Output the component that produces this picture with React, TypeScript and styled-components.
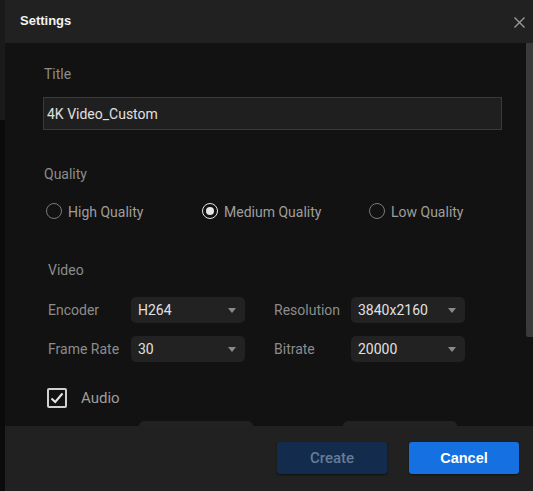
import React from "react";
import styled, { createGlobalStyle } from "styled-components";

const GlobalStyle = createGlobalStyle`
  html, body {
    margin: 0;
    padding: 0;
    background: #0b0b0b;
  }
  * {
    box-sizing: border-box;
  }
`;

const Screen = styled.div`
  display: flex;
  width: 533px;
  height: 491px;
  overflow: hidden;
  font-family: Roboto, "Liberation Sans", sans-serif;
`;

const Backdrop = styled.div`
  width: 5px;
  flex-shrink: 0;
  background: linear-gradient(#1a1a1a 0, #1a1a1a 120px, #0b0b0b 120px);
`;

const Dialog = styled.div`
  flex: 1;
  display: flex;
  flex-direction: column;
  background: #121212;
`;

const Header = styled.div`
  height: 43px;
  flex-shrink: 0;
  display: flex;
  align-items: center;
  justify-content: space-between;
  padding: 0 8px 0 15px;
  background: #212121;
`;

const HeaderTitle = styled.div`
  font-family: "Liberation Sans", Arial, sans-serif;
  font-weight: bold;
  font-size: 13px;
  color: #f2f2f2;
  margin-top: -2px;
`;

const CloseButton = styled.div`
  width: 11px;
  height: 11px;
  display: flex;
  margin-top: 2px;
  color: #9a9a9a;
`;

const Body = styled.div`
  flex: 1;
  position: relative;
  overflow: hidden;
  padding: 21px 0 0 38px;
`;

const Scrollbar = styled.div`
  position: absolute;
  top: 0;
  right: 0;
  width: 7px;
  height: 294px;
  background: #3a3a3a;
  border-bottom-left-radius: 2px;
`;

const Label = styled.div<{ $indent?: number }>`
  font-size: 14px;
  line-height: 20px;
  color: #8c8c8c;
  padding-left: ${(p) => p.$indent ?? 1}px;
`;

const TextInput = styled.input`
  display: block;
  width: 459px;
  height: 33px;
  margin: 13px 0 0 0;
  padding: 0 3px;
  background: #1f1f1f;
  border: 1px solid #3a3a3a;
  color: #e0e0e0;
  font-family: Roboto, "Liberation Sans", sans-serif;
  font-size: 14px;
  outline: none;
`;

const Section = styled.div<{ $gap: number }>`
  margin-top: ${(p) => p.$gap}px;
`;

const RadioGroup = styled.div`
  display: grid;
  grid-template-columns: 156px 167px auto;
  margin-top: 18px;
  padding-left: 3px;
`;

const RadioOption = styled.div`
  display: flex;
  align-items: center;
  gap: 6px;
  height: 20px;
  font-size: 14px;
  color: #9e9e9e;
`;

const RadioCircle = styled.span<{ $checked?: boolean }>`
  width: 16px;
  height: 16px;
  border-radius: 50%;
  border: 1.5px solid ${(p) => (p.$checked ? "#e6e6e6" : "#7a7a7a")};
  display: flex;
  align-items: center;
  justify-content: center;
  margin-top: -2px;

  &::after {
    content: "";
    display: ${(p) => (p.$checked ? "block" : "none")};
    width: 8px;
    height: 8px;
    border-radius: 50%;
    background: #e6e6e6;
  }
`;

const FieldGrid = styled.div<{ $cols: string }>`
  display: grid;
  grid-template-columns: ${(p) => p.$cols};
  row-gap: 13px;
  align-items: center;
  padding-left: 5px;
`;

const FieldLabel = styled.div`
  font-size: 14px;
  color: #8c8c8c;
`;

const Select = styled.div`
  position: relative;
  height: 26px;
  display: flex;
  align-items: center;
  padding-left: 7px;
  border-radius: 5px;
  background: #222222;
  color: #e0e0e0;
  font-size: 14px;

  &::after {
    content: "";
    position: absolute;
    right: 9px;
    top: 11px;
    border-left: 4.5px solid transparent;
    border-right: 4.5px solid transparent;
    border-top: 5px solid #8a8a8a;
  }
`;

const CheckRow = styled.div`
  display: flex;
  align-items: center;
  gap: 14px;
  margin-top: 26px;
  padding-left: 4px;
  font-size: 15px;
  color: #9e9e9e;
`;

const CheckBox = styled.span`
  width: 20px;
  height: 20px;
  border: 2px solid #d0d0d0;
  border-radius: 2px;
  display: flex;
  align-items: center;
  justify-content: center;
  color: #e6e6e6;
`;

const Footer = styled.div`
  height: 65px;
  flex-shrink: 0;
  display: flex;
  justify-content: flex-end;
  gap: 22px;
  padding: 16px 14px 0 0;
  background: #212121;
`;

const Button = styled.button<{ $primary?: boolean }>`
  width: 110px;
  height: 32px;
  border: none;
  border-radius: 3px;
  font-family: ${(p) => (p.$primary ? `"Liberation Sans", Arial` : "Roboto")}, sans-serif;
  font-size: ${(p) => (p.$primary ? "14.5px" : "15px")};
  font-weight: ${(p) => (p.$primary ? "bold" : 500)};
  background: ${(p) => (p.$primary ? "#1570e2" : "#132c4e")};
  color: ${(p) => (p.$primary ? "#ffffff" : "#677b96")};
  box-shadow: 0 1px 2px rgba(0, 0, 0, 0.5);
`;

const App = () => {
  return (
    <>
      <GlobalStyle />
      <Screen>
        <Backdrop />
        <Dialog>
          <Header>
            <HeaderTitle>Settings</HeaderTitle>
            <CloseButton>
              <svg width="11" height="11" viewBox="0 0 11 11">
                <path d="M0.5 0.5 L10.5 10.5 M10.5 0.5 L0.5 10.5" stroke="currentColor" strokeWidth="1.4" />
              </svg>
            </CloseButton>
          </Header>
          <Body>
            <Scrollbar />
            <Label>Title</Label>
            <TextInput defaultValue="4K Video_Custom" />

            <Section $gap={34}>
              <Label>Quality</Label>
              <RadioGroup>
                <RadioOption>
                  <RadioCircle />
                  High Quality
                </RadioOption>
                <RadioOption>
                  <RadioCircle $checked />
                  Medium Quality
                </RadioOption>
                <RadioOption>
                  <RadioCircle />
                  Low Quality
                </RadioOption>
              </RadioGroup>
            </Section>

            <Section $gap={38}>
              <Label $indent={5}>Video</Label>
            </Section>
            <Section $gap={17}>
              <FieldGrid $cols="83px 114px 29px 77px 114px">
                <FieldLabel>Encoder</FieldLabel>
                <Select>H264</Select>
                <span />
                <FieldLabel>Resolution</FieldLabel>
                <Select>3840x2160</Select>
                <FieldLabel>Frame Rate</FieldLabel>
                <Select>30</Select>
                <span />
                <FieldLabel>Bitrate</FieldLabel>
                <Select>20000</Select>
              </FieldGrid>
            </Section>

            <CheckRow>
              <CheckBox>
                <svg width="14" height="14" viewBox="0 0 14 14">
                  <path d="M1.5 7.5 L5.2 11 L12.5 2.5" fill="none" stroke="currentColor" strokeWidth="2" />
                </svg>
              </CheckBox>
              Audio
            </CheckRow>

            <Section $gap={13}>
              <FieldGrid $cols="91px 114px 90px 114px">
                <span />
                <Select />
                <span />
                <Select />
              </FieldGrid>
            </Section>
          </Body>
          <Footer>
            <Button>Create</Button>
            <Button $primary>Cancel</Button>
          </Footer>
        </Dialog>
      </Screen>
    </>
  );
};

export default App;
